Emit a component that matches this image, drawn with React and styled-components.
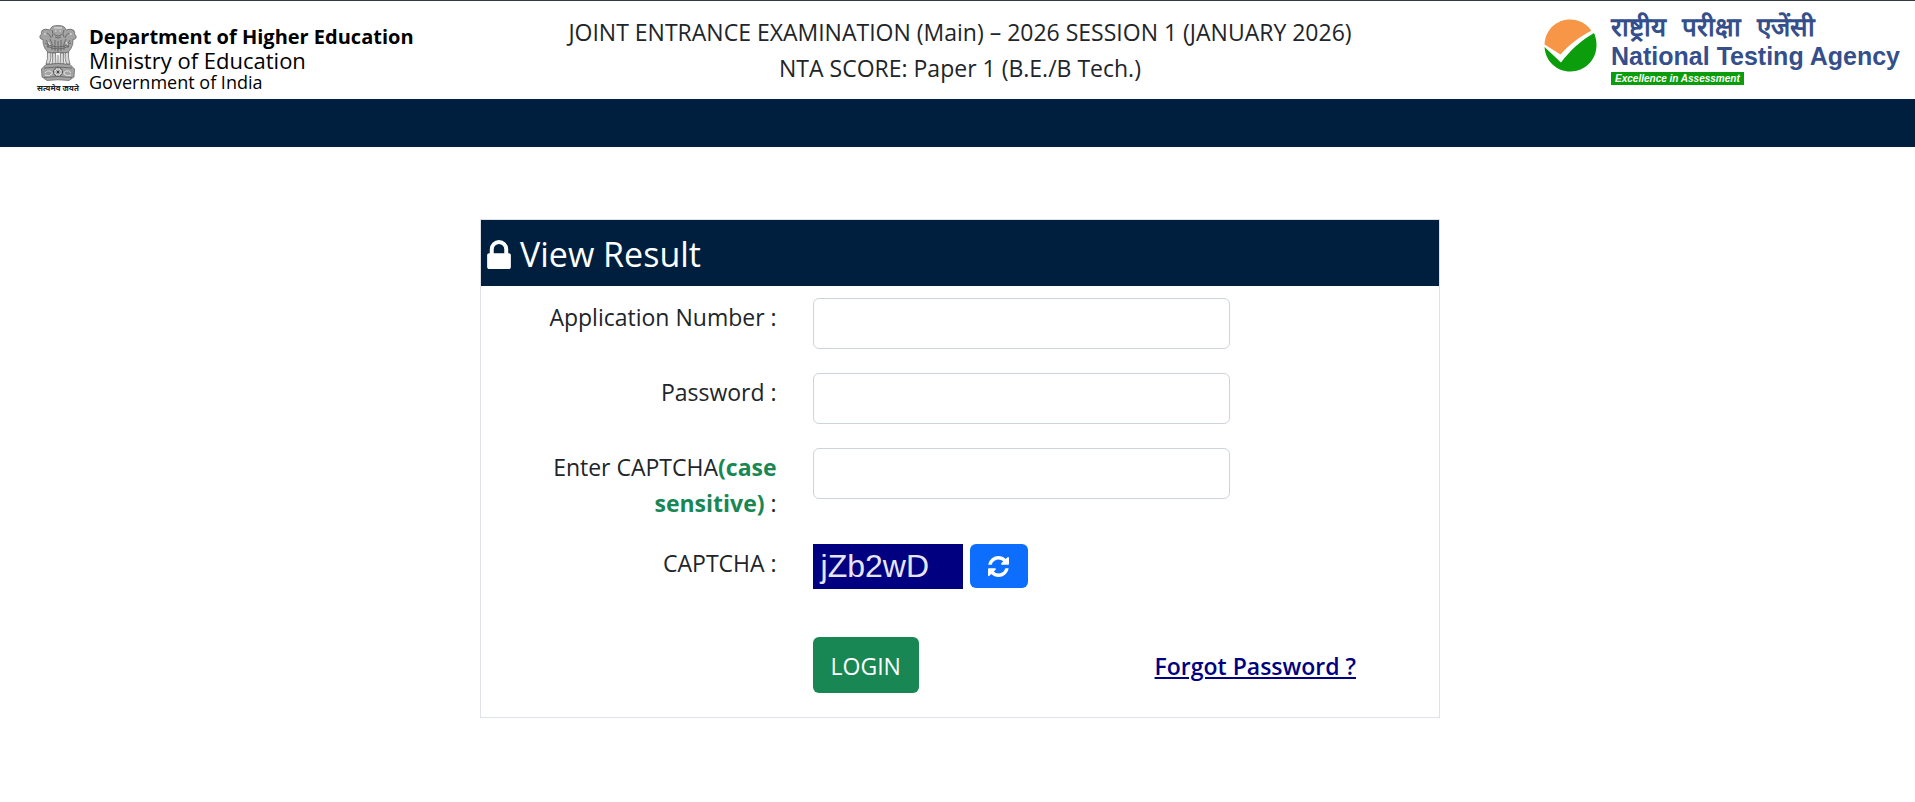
import React from "react";
import styled, { createGlobalStyle } from "styled-components";

const App = () => {
  return (
    <>
      <GlobalStyle />
      <Page>
        <Header>
          <Ministry>
            <Emblem>
              <EmblemArt />
              <Motto lang="hi">सत्यमेव जयते</Motto>
            </Emblem>
            <MinistryText>
              <Department>Department of Higher Education</Department>
              <MinistryName>Ministry of Education</MinistryName>
              <Government>Government of India</Government>
            </MinistryText>
          </Ministry>
          <Title>
            JOINT ENTRANCE EXAMINATION (Main) – 2026 SESSION 1 (JANUARY 2026)
            <br />
            NTA SCORE: Paper 1 (B.E./B Tech.)
          </Title>
          <Agency>
            <AgencyMark />
            <AgencyText>
              <AgencyHindi lang="hi">
                <span>राष्ट्रीय</span> <span>परीक्षा</span> <span>एजेंसी</span>
              </AgencyHindi>
              <AgencyName>National Testing Agency</AgencyName>
              <Tagline>Excellence in Assessment</Tagline>
            </AgencyText>
          </Agency>
        </Header>
        <NavBar />
        <Main>
          <Card>
            <CardHeading>
              <LockIcon />
              View Result
            </CardHeading>
            <Form onSubmit={(e) => e.preventDefault()}>
              <Row>
                <Label htmlFor="appno">Application Number :</Label>
                <Input id="appno" type="text" />
              </Row>
              <Row>
                <Label htmlFor="password">Password :</Label>
                <Input id="password" type="password" />
              </Row>
              <Row>
                <Label htmlFor="captcha">
                  Enter CAPTCHA<Hint>(case sensitive)</Hint> :
                </Label>
                <Input id="captcha" type="text" autoComplete="off" />
              </Row>
              <Row>
                <Label as="span">CAPTCHA :</Label>
                <Captcha>
                  <CaptchaCode>jZb2wD</CaptchaCode>
                  <RefreshButton type="button" aria-label="Refresh captcha">
                    <RefreshIcon />
                  </RefreshButton>
                </Captcha>
              </Row>
              <Row>
                <Actions>
                  <LoginButton type="submit">LOGIN</LoginButton>
                  <ForgotLink href="#forgot">Forgot Password ?</ForgotLink>
                </Actions>
              </Row>
            </Form>
          </Card>
        </Main>
      </Page>
    </>
  );
};

export default App;

const LockIcon = () => (
  <svg viewBox="0 128 1152 1408" width="24" height="29" fill="currentColor">
    <path d="M320 768h512v-192q0-106-75-181t-181-75-181 75-75 181v192zM1152 864v576q0 40-28 68t-68 28h-960q-40 0-68-28t-28-68v-576q0-40 28-68t68-28h32v-192q0-184 132-316t316-132 316 132 132 316v192h32q40 0 68 28t28 68z" />
  </svg>
);

const RefreshIcon = () => (
  <svg viewBox="0 0 1536 1536" width="21" height="21" fill="currentColor">
    <path d="M1511 928q0 5-1 7-64 268-268 434.500t-478 166.500q-146 0-282.500-55t-243.500-157l-129 129q-19 19-45 19t-45-19-19-45v-448q0-26 19-45t45-19h448q26 0 45 19t19 45-19 45l-137 137q71 66 161 102t187 36q134 0 250-65t186-179q11-17 53-117 8-23 30-23h192q13 0 22.500 9.500t9.500 22.500zM1536 128v448q0 26-19 45t-45 19h-448q-26 0-45-19t-19-45 19-45l138-138q-148-137-349-137-134 0-250 65t-186 179q-11 17-53 117-8 23-30 23h-199q-13 0-22.500-9.500t-9.500-22.500v-7q65-268 270-434.500t480-166.500q146 0 284 55.500t245 156.500l130-129q19-19 45-19t45 19 19 45z" />
  </svg>
);

const AgencyMark = () => (
  <svg viewBox="0 0 53 53" width="53" height="53">
    <path
      d="M0.600 25.500C1 11 12.500 0.500 26 0.500c9 0 17 4.300 21.300 11.300C36 17.500 25.500 25.500 16.500 35.500z"
      fill="#f79646"
    />
    <path
      d="M50 14c1.600 3.600 2.500 7.500 2.500 12.300C52.500 41 41 52.500 26.500 52.500 12.500 52.500 1.400 42 0.500 28l16.500 15.500C26 31.500 37 21.500 50 14z"
      fill="#0b9d0b"
    />
  </svg>
);

const EmblemArt = () => (
  <svg viewBox="0 0 40 56" width="40" height="56">
    <g fill="#a3a3a3" stroke="#5c5c5c" strokeWidth="0.700">
      {/* lions */}
      <path d="M13 3q1-2.500 7-2.500T27 3l1 2q5-2 8 .5 1 2 .5 3.500 2.500 2 1.500 4-1 1.500-3 1.500.500 5-2 9l-3 4H10l-3-4q-2.500-4-2-9-2 0-3-1.500-1-2 1.500-4Q3 7.500 4 5.500q3-2.500 8-.5z" />
      {/* legs */}
      <path
        d="M9.500 27q.5 7-1.500 12h3.500q2-5 1.500-11zM14.500 28q.5 6-.5 11h4l-.5-11zM22.500 28l-.5 11h4q-1-5-.5-11zM30.500 27q-.5 7 1.500 12h-3.500q-2-5-1.500-11z"
        fill="#d6d6d6"
      />
      {/* abacus */}
      <path d="M8 39.500q12-2 24 0l4.500 4.500-.5 8-5 3.500q-11-1.500-22 0L4 52l-.5-8z" />
    </g>
    <g fill="none" stroke="#5c5c5c" strokeWidth="0.800">
      <path d="M14 5q2 4 0 7M26 5q-2 4 0 7M16 9q4 4 8 0M17 12q3 2 6 0M9 8q3 1 4 5M31 8q-3 1-4 5" />
      <path d="M8 15q3 3 2 8M32 15q-3 3-2 8M12 14q3 4 2 11M28 14q-3 4-2 11M17 15v11M20 16v11M23 15v11M9 21q11 6 22 0M7 18q13 8 26 0" />
      <path d="M20 30v9M6 43q14-2 28 0M6 52.500q14-2 28 0" />
      <path d="M7 48q2-3 5-2t2 3q-3 3-7 1M33 48q-2-3-5-2t-2 3q3 3 7 1" stroke="#eee" />
    </g>
    <path
      d="M16 3h8M17 6h1.500M21.500 6H23M6 9h2M32 9h2M10 17l2 3M28 17l2 3"
      stroke="#eaeaea"
    />
    <circle cx="20" cy="47" r="4.500" fill="#ddd" stroke="#555" />
    <path
      d="M20 43v8M16 47h8M17.200 44.200l5.600 5.600M22.800 44.200l-5.600 5.600"
      stroke="#777"
      strokeWidth="0.600"
    />
    <circle cx="20" cy="47" r="1.200" fill="#444" />
  </svg>
);

const GlobalStyle = createGlobalStyle`
  *, *::before, *::after {
    box-sizing: border-box;
  }
  body {
    margin: 0;
    overflow-x: hidden;
    background: #fff;
    color: #212529;
    font-family: "Segoe UI", "Open Sans", "Noto Sans", sans-serif;
    font-size: 23px;
    line-height: 36px;
  }
  svg {
    display: block;
    flex-shrink: 0;
  }
`;

// the rows bleed a little past the right edge of the window
const Page = styled.div`
  margin-right: -5px;
`;

const Header = styled.header`
  display: grid;
  grid-template-columns: 1fr 2fr 1fr;
  border-top: 1px solid #343a40;
  padding-bottom: 13px;
`;

const Ministry = styled.div`
  display: flex;
  align-items: flex-start;
  gap: 9px;
  padding: 24px 0 0 36px;
  height: 84px;
`;

const Emblem = styled.div`
  display: flex;
  flex-direction: column;
  align-items: center;
  width: 44px;
`;

const Motto = styled.span`
  font-size: 8px;
  font-weight: 700;
  line-height: 13px;
  white-space: nowrap;
`;

const MinistryText = styled.div`
  display: flex;
  flex-direction: column;
  color: #000;
  font-family: "Open Sans", sans-serif;
  white-space: nowrap;
`;

const Department = styled.strong`
  font-size: 20px;
  line-height: 24px;
`;

const MinistryName = styled.span`
  font-size: 22px;
  line-height: 23px;
`;

const Government = styled.span`
  font-size: 18px;
  line-height: 20px;
`;

const Title = styled.div`
  padding-top: 13px;
  text-align: center;
`;

const Agency = styled.div`
  display: flex;
  align-items: flex-start;
  justify-content: flex-end;
  gap: 14px;
  padding: 18px 20px 0 0;
  height: 84px;
`;

const AgencyText = styled.div`
  display: flex;
  flex-direction: column;
  align-items: flex-start;
  margin-top: -6px;
  color: #344f8b;
  font-family: "Liberation Sans", Arial, sans-serif;
  font-weight: 700;
  white-space: nowrap;
`;

const AgencyHindi = styled.span`
  display: flex;
  gap: 16px;
  font-size: 26px;
  font-weight: 600;
  line-height: 28px;
`;

const AgencyName = styled.span`
  font-size: 25px;
  line-height: 31px;
`;

const Tagline = styled.span`
  padding: 0 4px;
  background: #0b9d0b;
  color: #fff;
  font-size: 10px;
  font-style: italic;
  line-height: 13px;
`;

const NavBar = styled.nav`
  height: 48px;
  background: #001f3f;
`;

const Main = styled.main`
  display: flex;
  justify-content: center;
  padding: 72px 0;
`;

const Card = styled.section`
  width: 50%;
  border: 1px solid #dee2e6;
`;

const CardHeading = styled.h1`
  display: flex;
  align-items: center;
  gap: 9px;
  margin: 0;
  padding: 13px 6px 11px;
  background: #001f3f;
  color: #fff;
  font-size: 34px;
  font-weight: 400;
  line-height: 42px;
`;

const Form = styled.form`
  display: flex;
  flex-direction: column;
  gap: 24px;
  padding: 12px 12px 24px;
`;

const Row = styled.div`
  display: grid;
  grid-template-columns: 6fr 13fr;
  column-gap: 36px;
  align-items: start;
`;

const Label = styled.label`
  margin: 1px 0 -1px;
  text-align: right;
`;

const Hint = styled.b`
  color: #198754;
`;

const Input = styled.input`
  width: 68%;
  height: 51px;
  padding: 6px 12px;
  border: 1px solid #ced4da;
  border-radius: 6px;
  background: #fff;
  color: inherit;
  font: inherit;
`;

const Captcha = styled.div`
  display: flex;
  align-items: flex-start;
  gap: 7px;
`;

const CaptchaCode = styled.span`
  width: 150px;
  padding-left: 8px;
  background: #000080;
  color: #e6e6fa;
  font-family: "Liberation Sans", Arial, sans-serif;
  font-size: 32px;
  line-height: 45px;
`;

const Button = styled.button`
  border: 0;
  border-radius: 6px;
  color: #fff;
  font: inherit;
  cursor: pointer;
`;

const RefreshButton = styled(Button)`
  display: flex;
  align-items: center;
  justify-content: center;
  width: 58px;
  height: 44px;
  background: #0d6efd;
`;

const Actions = styled.div`
  display: flex;
  grid-column: 2;
  align-items: center;
  justify-content: space-between;
  margin-top: 24px;
  padding-right: 71px;
`;

const LoginButton = styled(Button)`
  padding: 11px 18px 9px;
  background: #198754;
`;

const ForgotLink = styled.a`
  margin-top: 2px;
  color: #000080;
  font-weight: 600;
`;
